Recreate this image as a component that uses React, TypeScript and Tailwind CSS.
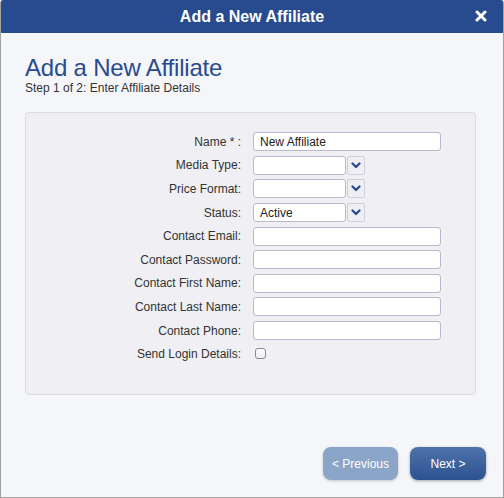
import React from "react";

const font = { fontFamily: '"Liberation Sans", Arial, Helvetica, sans-serif' };

function Chevron() {
  return (
    <svg width="10" height="7" viewBox="0 0 10 7">
      <path d="M1.5 1.5 L5 5 L8.5 1.5" fill="none" stroke="#2b4a8c" strokeWidth="2.2" strokeLinecap="round" strokeLinejoin="round" />
    </svg>
  );
}

function TextInput({ value = "" }: { value?: string }) {
  return (
    <div className="w-[188px] h-[19px] bg-white border border-[#b9b8cc] rounded-[3px] flex items-center px-[6px] text-[12px] text-[#222]">
      {value}
    </div>
  );
}

function SelectInput({ value = "" }: { value?: string }) {
  return (
    <div className="flex items-center h-[19px]">
      <div className="w-[93px] h-[19px] bg-white border border-[#b9b8cc] rounded-[3px] flex items-center px-[6px] text-[12px] text-[#222]">
        {value}
      </div>
      <div className="w-[18px] h-[19px] ml-[1px] bg-[#eeeef3] border border-[#d0d0dc] rounded-[2px] flex items-center justify-center">
        <Chevron />
      </div>
    </div>
  );
}

function Row({ label, children }: { label: string; children: React.ReactNode }) {
  return (
    <div className="flex items-center h-[23.6px]">
      <div className="w-[216px] text-right text-[12px] text-[#333] pr-[1px]">{label}</div>
      <div className="ml-[11px]">{children}</div>
    </div>
  );
}

export default function App() {
  return (
    <div style={font} className="w-[504px] h-[498px] bg-[#f5f6fa] border-l border-r border-b border-[#a3a3a3] rounded-tl-[3px] rounded-tr-[3px] overflow-hidden flex flex-col">
      <div className="h-[33px] bg-[#284b8f] flex items-center justify-center relative">
        <span className="text-white font-bold text-[16px]">Add a New Affiliate</span>
        <svg className="absolute right-[16px] top-[10px]" width="12" height="12" viewBox="0 0 12 12">
          <path d="M2 2 L10 10 M10 2 L2 10" stroke="white" strokeWidth="3" strokeLinecap="round" />
        </svg>
      </div>
      <div className="px-[24px] pt-[21px]">
        <h1 className="text-[24px] leading-[28px] text-[#284b8f] tracking-[-0.2px]">Add a New Affiliate</h1>
        <p className="text-[12px] leading-[14px] text-[#333] mt-[-1px]">Step 1 of 2: Enter Affiliate Details</p>
        <div className="mt-[17px] w-[451px] h-[283px] bg-[#efeff4] border border-[#dcdce3] rounded-[4px] pt-[17px] flex flex-col">
          <Row label="Name * :"><TextInput value="New Affiliate" /></Row>
          <Row label="Media Type:"><SelectInput /></Row>
          <Row label="Price Format:"><SelectInput /></Row>
          <Row label="Status:"><SelectInput value="Active" /></Row>
          <Row label="Contact Email:"><TextInput /></Row>
          <Row label="Contact Password:"><TextInput /></Row>
          <Row label="Contact First Name:"><TextInput /></Row>
          <Row label="Contact Last Name:"><TextInput /></Row>
          <Row label="Contact Phone:"><TextInput /></Row>
          <Row label="Send Login Details:">
            <div className="w-[11px] h-[11px] mt-[-2px] ml-[2px] bg-gradient-to-b from-white to-[#ececec] border border-[#8a8a8a] rounded-[3px]" />
          </Row>
        </div>
      </div>
      <div className="flex-1" />
      <div className="flex justify-end gap-[12px] pr-[17px] pb-[17px]">
        <button className="w-[75px] h-[33px] rounded-[8px] bg-[#8ba5c8] text-white text-[12px] shadow-[0_1px_3px_rgba(0,0,0,0.2)]">&lt; Previous</button>
        <button className="w-[76px] h-[33px] rounded-[8px] bg-gradient-to-b from-[#4e72a8] to-[#2d5292] text-white text-[12px] shadow-[0_1px_3px_rgba(0,0,0,0.35)]">Next &gt;</button>
      </div>
    </div>
  );
}
